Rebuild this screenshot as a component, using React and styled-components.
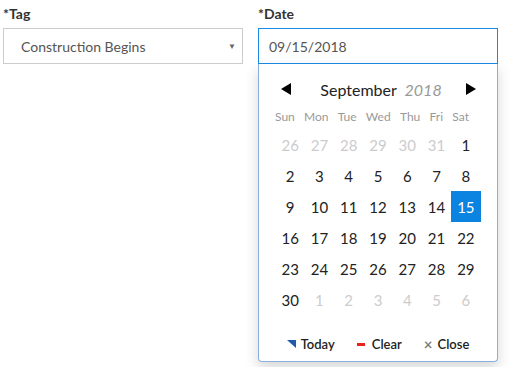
import React from "react";
import styled, { createGlobalStyle } from "styled-components";

const GlobalStyle = createGlobalStyle`
  body {
    margin: 0;
    background: #fff;
    font-family: Lato, "Open Sans", sans-serif;
  }
`;

const dayNames = ["Sun", "Mon", "Tue", "Wed", "Thu", "Fri", "Sat"];

const buildWeeks = () => {
  const cells = [];
  [26, 27, 28, 29, 30, 31].forEach((d) => cells.push({ d, other: true }));
  for (let d = 1; d <= 30; d++) cells.push({ d, other: false });
  for (let d = 1; d <= 6; d++) cells.push({ d, other: true });
  return cells;
};

const App = () => {
  const cells = buildWeeks();
  return (
    <>
      <GlobalStyle />
      <Page>
        <Field>
          <Label>*Tag</Label>
          <Select>
            <span>Construction Begins</span>
            <Caret>▼</Caret>
          </Select>
        </Field>
        <Field>
          <Label>*Date</Label>
          <DateInput>09/15/2018</DateInput>
          <Popup>
            <Header>
              <Arrow viewBox="0 0 10 12">
                <polygon points="10,0 10,12 0,6" />
              </Arrow>
              <MonthTitle>
                September <Year>2018</Year>
              </MonthTitle>
              <Arrow viewBox="0 0 10 12">
                <polygon points="0,0 0,12 10,6" />
              </Arrow>
            </Header>
            <NamesRow>
              {dayNames.map((n) => (
                <DayName key={n}>{n}</DayName>
              ))}
            </NamesRow>
            <Grid>
              {cells.map((c, i) => (
                <Day key={i} $other={c.other} $selected={!c.other && c.d === 15}>
                  {c.d}
                </Day>
              ))}
            </Grid>
            <Footer>
              <FooterButton>
                <svg width="9" height="8" viewBox="0 0 9 8">
                  <polygon points="0,0 9,0 9,8" fill="#1c5cab" />
                </svg>
                Today
              </FooterButton>
              <FooterButton>
                <ClearMark />
                Clear
              </FooterButton>
              <FooterButton>
                <CloseMark>×</CloseMark>
                Close
              </FooterButton>
            </Footer>
          </Popup>
        </Field>
      </Page>
    </>
  );
};

export default App;

const Page = styled.div`
  display: flex;
  gap: 15px;
  padding: 5px 3px;
`;

const Field = styled.div`
  width: 240px;
  display: flex;
  flex-direction: column;
`;

const Label = styled.div`
  font-size: 14px;
  font-weight: 700;
  color: #333;
  height: 23px;
  line-height: 18px;
`;

const Select = styled.div`
  height: 36px;
  box-sizing: border-box;
  border: 1px solid #ccc;
  display: flex;
  align-items: center;
  justify-content: space-between;
  padding: 0 6px 0 17px;
  font-size: 14px;
  color: #555;
`;

const Caret = styled.span`
  font-size: 8px;
  color: #666;
`;

const DateInput = styled.div`
  height: 36px;
  box-sizing: border-box;
  border: 1px solid #1a8ae6;
  display: flex;
  align-items: center;
  padding: 0 10px;
  font-size: 14px;
  color: #555;
`;

const Popup = styled.div`
  box-sizing: border-box;
  border: 1px solid #8aaee0;
  border-top: none;
  border-radius: 0 0 4px 4px;
  box-shadow: 0 6px 14px rgba(0, 0, 0, 0.16);
  background: #fff;
  padding-top: 14px;
  height: 298px;
  display: flex;
  flex-direction: column;
  align-items: center;
`;

const Header = styled.div`
  width: 195px;
  display: flex;
  align-items: center;
  justify-content: space-between;
  height: 22px;
`;

const Arrow = styled.svg`
  width: 10px;
  height: 12px;
  fill: #000;
`;

const MonthTitle = styled.div`
  font-size: 16px;
  color: #222;
  margin-left: 6px;
`;

const Year = styled.span`
  font-style: italic;
  color: #999;
  margin-left: 4px;
`;

const NamesRow = styled.div`
  width: 194px;
  height: 25px;
  margin-top: 4px;
  margin-right: 12px;
  display: flex;
  align-items: center;
  justify-content: space-between;
`;

const DayName = styled.div`
  font-size: 12px;
  color: #999;
`;

const Grid = styled.div`
  width: 205px;
  display: grid;
  grid-template-columns: repeat(7, 1fr);
  grid-auto-rows: 31px;
`;

const Day = styled.div`
  font-size: 15px;
  display: flex;
  align-items: center;
  justify-content: center;
  color: ${(p) => (p.$selected ? "#fff" : p.$other ? "#ccc" : "#222")};
  background: ${(p) => (p.$selected ? "#0a84e0" : "transparent")};
`;

const Footer = styled.div`
  height: 46px;
  box-sizing: border-box;
  padding-top: 20px;
  display: flex;
  align-items: flex-start;
  justify-content: center;
  gap: 22px;
`;

const FooterButton = styled.div`
  display: flex;
  align-items: center;
  gap: 5px;
  height: 18px;
  font-size: 13px;
  font-weight: 600;
  color: #222;
`;

const ClearMark = styled.span`
  width: 8px;
  height: 3px;
  background: #e8231a;
  margin-right: 2px;
`;

const CloseMark = styled.span`
  color: #777;
  font-size: 15px;
  line-height: 1;
`;
